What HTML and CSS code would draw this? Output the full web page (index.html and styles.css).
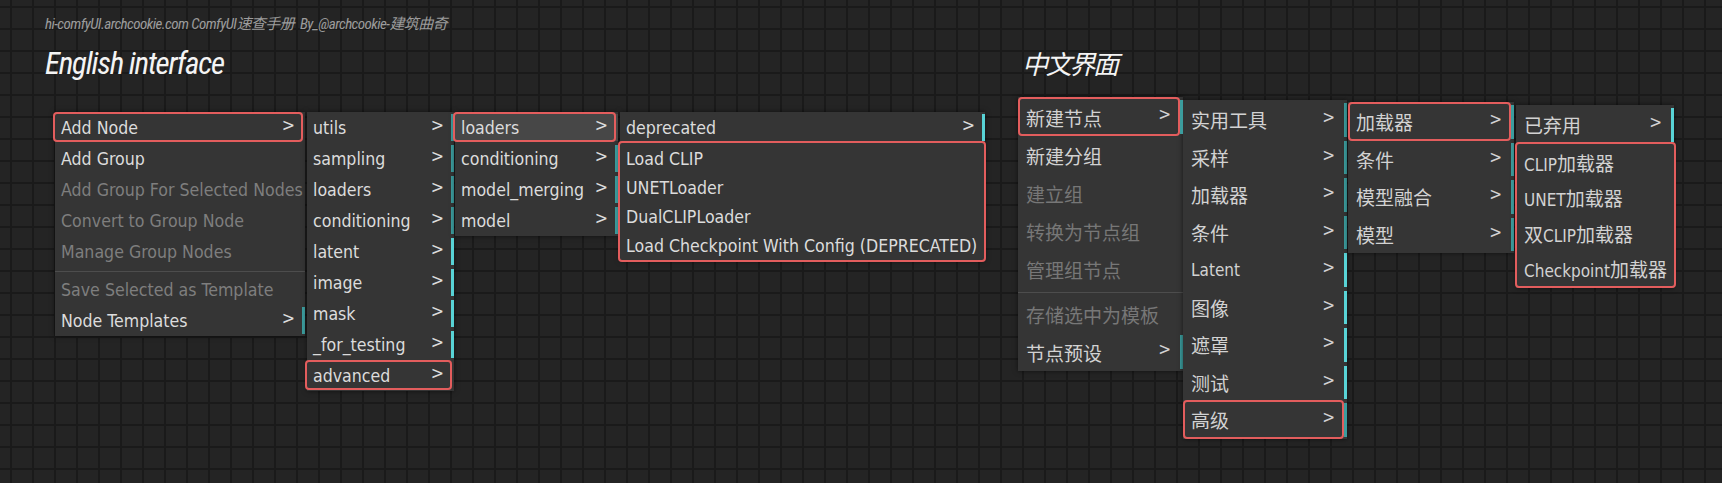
FILE: index.html
```html
<!DOCTYPE html>
<html lang="zh-CN">
<head>
<meta charset="utf-8">
<title>ComfyUI menus</title>
<link rel="stylesheet" href="styles.css">
</head>
<body>
<div class="page">
  <section class="panel en">
    <p class="credit">hi-comfyUI.archcookie.com ComfyUI速查手册 &nbsp;By_@archcookie-建筑曲奇</p>
    <h1 class="title"><span class="title-in">English interface</span></h1>
    <div class="cascade">
      <div class="menu m1">
        <div class="item sub nobar hl"><span>Add Node</span><span class="arr">&gt;</span></div>
        <div class="item"><span>Add Group</span></div>
        <div class="item dis"><span>Add Group For Selected Nodes</span></div>
        <div class="item dis"><span>Convert to Group Node</span></div>
        <div class="item dis"><span>Manage Group Nodes</span></div>
        <div class="sep"></div>
        <div class="item dis"><span>Save Selected as Template</span></div>
        <div class="item sub"><span>Node Templates</span><span class="arr">&gt;</span></div>
      </div>
      <div class="menu m2">
        <div class="item sub"><span>utils</span><span class="arr">&gt;</span></div>
        <div class="item sub"><span>sampling</span><span class="arr">&gt;</span></div>
        <div class="item sub"><span>loaders</span><span class="arr">&gt;</span></div>
        <div class="item sub"><span>conditioning</span><span class="arr">&gt;</span></div>
        <div class="item sub bright"><span>latent</span><span class="arr">&gt;</span></div>
        <div class="item sub bright"><span>image</span><span class="arr">&gt;</span></div>
        <div class="item sub bright"><span>mask</span><span class="arr">&gt;</span></div>
        <div class="item sub bright"><span>_for_testing</span><span class="arr">&gt;</span></div>
        <div class="item sub nobar hl"><span>advanced</span><span class="arr">&gt;</span></div>
      </div>
      <div class="menu m3">
        <div class="item sub nobar hl hover"><span>loaders</span><span class="arr">&gt;</span></div>
        <div class="item sub"><span>conditioning</span><span class="arr">&gt;</span></div>
        <div class="item sub"><span>model_merging</span><span class="arr">&gt;</span></div>
        <div class="item sub"><span>model</span><span class="arr">&gt;</span></div>
      </div>
      <div class="menu m4">
        <div class="item sub bright"><span>deprecated</span><span class="arr">&gt;</span></div>
        <div class="group hl">
          <div class="item"><span>Load CLIP</span></div>
          <div class="item"><span>UNETLoader</span></div>
          <div class="item"><span>DualCLIPLoader</span></div>
          <div class="item"><span>Load Checkpoint With Config (DEPRECATED)</span></div>
        </div>
      </div>
    </div>
  </section>

  <section class="panel zh">
    <h1 class="title zh-title"><span class="title-in">中文界面</span></h1>
    <div class="cascade">
      <div class="menu m1">
        <div class="item sub hl"><span>新建节点</span><span class="arr">&gt;</span></div>
        <div class="item"><span>新建分组</span></div>
        <div class="item dis"><span>建立组</span></div>
        <div class="item dis"><span>转换为节点组</span></div>
        <div class="item dis"><span>管理组节点</span></div>
        <div class="sep"></div>
        <div class="item dis"><span>存储选中为模板</span></div>
        <div class="item sub"><span>节点预设</span><span class="arr">&gt;</span></div>
      </div>
      <div class="menu m2">
        <div class="item sub"><span>实用工具</span><span class="arr">&gt;</span></div>
        <div class="item sub"><span>采样</span><span class="arr">&gt;</span></div>
        <div class="item sub"><span>加载器</span><span class="arr">&gt;</span></div>
        <div class="item sub"><span>条件</span><span class="arr">&gt;</span></div>
        <div class="item sub bright"><span class="lat">Latent</span><span class="arr">&gt;</span></div>
        <div class="item sub bright"><span>图像</span><span class="arr">&gt;</span></div>
        <div class="item sub bright"><span>遮罩</span><span class="arr">&gt;</span></div>
        <div class="item sub bright"><span>测试</span><span class="arr">&gt;</span></div>
        <div class="item sub hl"><span>高级</span><span class="arr">&gt;</span></div>
      </div>
      <div class="menu m3">
        <div class="item sub hl"><span>加载器</span><span class="arr">&gt;</span></div>
        <div class="item sub"><span>条件</span><span class="arr">&gt;</span></div>
        <div class="item sub"><span>模型融合</span><span class="arr">&gt;</span></div>
        <div class="item sub"><span>模型</span><span class="arr">&gt;</span></div>
      </div>
      <div class="menu m4">
        <div class="item sub bright"><span>已弃用</span><span class="arr">&gt;</span></div>
        <div class="group hl">
          <div class="item"><span><span class="lat">CLIP</span>加载器</span></div>
          <div class="item"><span><span class="lat">UNET</span>加载器</span></div>
          <div class="item"><span>双<span class="lat">CLIP</span>加载器</span></div>
          <div class="item"><span><span class="lat">Checkpoint</span>加载器</span></div>
        </div>
      </div>
    </div>
  </section>
</div>
</body>
</html>
```

FILE: styles.css
```css
html, body {
  margin: 0;
  padding: 0;
}

body {
  width: 1722px;
  height: 483px;
  overflow: hidden;
  background-color: #242424;
  background-image:
    linear-gradient(#1a1a1a 2px, transparent 2px),
    linear-gradient(90deg, #1a1a1a 2px, transparent 2px);
  background-size: 22px 22px;
  background-position: 10px 6px;
  font-family: "DejaVu Sans Condensed", "DejaVu Sans", "Noto Sans CJK SC", sans-serif;
  font-stretch: condensed;
  color: #dcdcdc;
}

.page {
  display: grid;
  grid-template-columns: 1018px 1fr;
}

.panel.en {
  padding-left: 45px;
}

.credit {
  margin: 15px 0 0;
  font-family: Roboto, "Noto Sans CJK SC", sans-serif;
  font-stretch: 75%;
  font-style: italic;
  font-size: 15px;
  line-height: 18px;
  letter-spacing: -0.55px;
  color: #9c9c9c;
  white-space: nowrap;
}

.title {
  margin: 14px 0 0;
  font-family: Roboto, "Noto Sans CJK SC", sans-serif;
  font-stretch: 75%;
  font-style: italic;
  font-weight: 400;
  font-size: 31px;
  line-height: 34px;
  letter-spacing: -1.2px;
  color: #f4f4f4;
  white-space: nowrap;
}

.title-in {
  display: inline-block;
}

.cascade {
  display: flex;
  align-items: flex-start;
}

.en .cascade {
  margin: 31px 0 0 10px;
  font-size: 17.6px;
}

.menu {
  background: #353535;
  box-shadow: 0 0 5px rgba(0, 0, 0, 0.55);
  display: flex;
  flex-direction: column;
}

.item {
  display: flex;
  align-items: center;
  margin: 2px 0;
  height: 27px;
  padding-left: 6px;
  white-space: nowrap;
}

.item.dis {
  color: #7e7e7e;
}

.item.hover {
  background: #474747;
}

.item.sub {
  border-right: 3px solid #3c9d9e;
}

.item.sub.bright {
  border-right-color: #58d3d6;
}

.item.sub.nobar {
  border-right-color: transparent;
}

.arr {
  margin-left: auto;
  padding: 0 7px 0 10px;
  align-self: flex-start;
  line-height: 22px;
}

.hl {
  position: relative;
  z-index: 1;
}

.hl::after {
  content: "";
  position: absolute;
  inset: -2px -1px -1px -2px;
  border: 2px solid #e35d5d;
  border-radius: 4px;
  pointer-events: none;
}

.sep {
  height: 1px;
  margin: 4px 0 2px;
  background: #4d4d4d;
}

.en .m1 { width: 250px; }
.en .m2 { width: 147px; margin-left: 2px; }
.en .m3 { width: 163px; margin-left: 1px; }
.en .m4 { width: 365px; margin-left: 2px; }

/* Chinese panel */
.panel.zh {
  padding-top: 48px;
}

.zh-title {
  margin: 0 0 0 4px;
  font-family: "Noto Sans CJK SC", sans-serif;
  font-weight: 400;
  font-size: 26px;
  line-height: 30px;
  letter-spacing: -2.3px;
}

.zh .cascade {
  margin-top: 19px;
  font-family: "Noto Sans CJK SC", sans-serif;
  font-size: 19px;
  color: #d2d2d2;
}

.zh .item {
  height: 33.5px;
  padding-left: 8px;
}

.zh .m1 .item {
  height: 34px;
}

.zh .item.dis {
  color: #777;
}

.zh .sep {
  margin: 4px 0 2px;
}

.zh .menu {
  padding-top: 1px;
}

.zh .hl::after {
  inset: -3px 0 -2px 0;
}

.zh .group.hl::after {
  inset: -2px -2px 0 -1px;
}

.zh .arr,
.lat {
  font-family: "DejaVu Sans Condensed", "DejaVu Sans", sans-serif;
  font-size: 17px;
}

.zh .arr {
  line-height: 28px;
  padding-right: 9px;
}

.zh .m1 { width: 165px; }
.zh .m2 { width: 164px; margin-top: 3px; }
.zh .m3 { width: 166px; margin-top: 5px; margin-left: 1px; }
.zh .m4 { width: 158px; margin-top: 8px; margin-left: 2px; }
```
